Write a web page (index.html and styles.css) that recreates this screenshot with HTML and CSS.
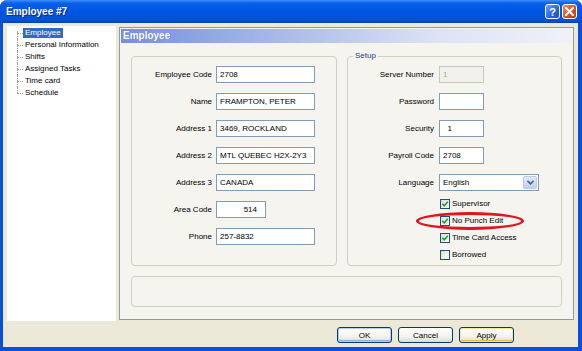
FILE: index.html
```html
<!doctype html>
<html lang="en">
<head>
	<meta charset="UTF-8">
	<title>Employee #7</title>
	<link rel="stylesheet" href="styles.css">
</head>
<body>

	<div class="window">

		<div class="titleBar">
			<span class="titleText">Employee #7</span>
			<span class="titleButtons">
				<span class="capBtn helpBtn">?</span>
				<span class="capBtn closeBtn">
					<svg width="9" height="9" viewBox="0 0 9 9"><path d="M1 1L8 8M8 1L1 8" stroke="#fff" stroke-width="2" stroke-linecap="square"/></svg>
				</span>
			</span>
		</div>

		<div class="frame">

			<div class="mainRow">

				<ul class="tree">
					<li><span class="selected">Employee</span></li>
					<li><span>Personal Information</span></li>
					<li><span>Shifts</span></li>
					<li><span>Assigned Tasks</span></li>
					<li><span>Time card</span></li>
					<li><span>Schedule</span></li>
				</ul>

				<div class="page">
					<div class="pageHeader">Employee</div>

					<div class="groups">

						<fieldset class="group personGroup">
							<div class="form personForm">
								<label>Employee Code</label><input class="field" type="text" value="2708">
								<label>Name</label><input class="field" type="text" value="FRAMPTON, PETER">
								<label>Address 1</label><input class="field" type="text" value="3469, ROCKLAND">
								<label>Address 2</label><input class="field" type="text" value="MTL QUEBEC H2X-2Y3">
								<label>Address 3</label><input class="field" type="text" value="CANADA">
								<label>Area Code</label><input class="field shortField" type="text" value="514">
								<label>Phone</label><input class="field" type="text" value="257-8832">
							</div>
						</fieldset>

						<fieldset class="group setupGroup">
							<legend>Setup</legend>
							<div class="form setupForm">
								<label>Server Number</label><input class="field smallField" type="text" value="1" disabled>
								<label>Password</label><input class="field smallField" type="password" value="">
								<label>Security</label><input class="field smallField" type="text" value="  1">
								<label>Payroll Code</label><input class="field smallField" type="text" value="2708">
								<label>Language</label>
								<div class="combo">
									<span class="comboText">English</span>
									<span class="comboBtn">
										<svg width="7" height="5" viewBox="0 0 7 5"><path d="M0.5 0.8L3.5 3.8L6.5 0.8" fill="none" stroke="#4d6185" stroke-width="1.6"/></svg>
									</span>
								</div>
							</div>

							<div class="checks">
								<div class="check"><span class="box on"><svg width="8" height="8" viewBox="0 0 8 8"><path d="M1.2 3.8L3.2 5.8L6.8 1.8" fill="none" stroke="#21a121" stroke-width="1.6"/></svg></span>Supervisor</div>
								<div class="check"><span class="box on"><svg width="8" height="8" viewBox="0 0 8 8"><path d="M1.2 3.8L3.2 5.8L6.8 1.8" fill="none" stroke="#21a121" stroke-width="1.6"/></svg></span>No Punch Edit<span class="ring"></span></div>
								<div class="check"><span class="box on"><svg width="8" height="8" viewBox="0 0 8 8"><path d="M1.2 3.8L3.2 5.8L6.8 1.8" fill="none" stroke="#21a121" stroke-width="1.6"/></svg></span>Time Card Access</div>
								<div class="check"><span class="box"></span>Borrowed</div>
							</div>
						</fieldset>

					</div>

					<div class="group notesGroup"></div>
				</div>

			</div>

			<div class="buttonRow">
				<button class="btn okBtn">OK</button>
				<button class="btn">Cancel</button>
				<button class="btn applyBtn">Apply</button>
			</div>

		</div>

	</div>

</body>
</html>
```

FILE: styles.css
```css
* {
	box-sizing: border-box;
}
html, body {
	margin: 0px;
	padding: 0px;
	background: #ffffff;
}
body {
	font-family: "Liberation Sans", Arial, sans-serif;
	font-size: 8px;
	color: #000000;
}

.window {
	width: 582px;
	height: 351px;
	display: flex;
	flex-direction: column;
	background: #0a4fd6;
	border-radius: 7px 7px 0 0;
}

/* title bar */
.titleBar {
	height: 23px;
	flex: none;
	display: flex;
	align-items: center;
	justify-content: space-between;
	padding: 0 5px 0 6px;
	border-radius: 7px 7px 0 0;
	background: linear-gradient(to bottom, #3d8ffa 0%, #0a5fe8 14%, #0055e3 50%, #0352d8 88%, #0341b4 100%);
}
.titleText {
	color: #ffffff;
	font-weight: bold;
	font-size: 10px;
	text-shadow: 1px 1px 0 #0b2a8a;
}
.titleButtons {
	display: flex;
	gap: 2px;
}
.capBtn {
	width: 15px;
	height: 15px;
	border: 1px solid #ffffff;
	border-radius: 3px;
	display: flex;
	align-items: center;
	justify-content: center;
}
.helpBtn {
	background: linear-gradient(135deg, #6fa1ff, #2363e0 60%, #1a52cc);
	color: #ffffff;
	font-weight: bold;
	font-size: 11px;
}
.closeBtn {
	background: linear-gradient(135deg, #f0906c, #d9502c 55%, #c03a1c);
}

/* dialog body */
.frame {
	flex: 1;
	margin: 0 4px 4px 3px;
	padding: 3px 4px 0 4px;
	background: #ece9d8;
	display: flex;
	flex-direction: column;
}
.mainRow {
	display: flex;
	gap: 3px;
	height: 295px;
}

/* tree */
.tree {
	width: 109px;
	margin: 0;
	padding: 1px 0 0 0;
	list-style: none;
	background: #ffffff;
}
.tree li {
	position: relative;
	height: 12px;
	display: flex;
	align-items: center;
	padding-left: 16px;
}
.tree li span {
	height: 10px;
	line-height: 10px;
	padding: 0 2px;
	white-space: nowrap;
}
.tree li span.selected {
	background: #316ac5;
	color: #ffffff;
}
.tree li::before {
	content: "";
	position: absolute;
	left: 10px;
	top: 6px;
	width: 6px;
	border-top: 1px dotted #9a9a9a;
}
.tree li::after {
	content: "";
	position: absolute;
	left: 10px;
	top: 0;
	bottom: 0;
	border-left: 1px dotted #9a9a9a;
}
.tree li:first-child::after {
	top: 4px;
}
.tree li:last-child::after {
	bottom: 6px;
}

/* page */
.page {
	flex: 1;
	margin: 1px 0;
	border: 1px solid #919b9c;
	background: #f5f4ef;
	display: flex;
	flex-direction: column;
}
.pageHeader {
	margin: 1px 2px 0 1px;
	height: 14px;
	line-height: 14px;
	padding-left: 2px;
	font-size: 10px;
	font-weight: bold;
	color: #ffffff;
	text-shadow: 1px 0 0 rgba(40, 60, 140, 0.3);
	background: linear-gradient(to right, #7590dc 0%, #a8b9ea 35%, #dde3f5 70%, #f0f1f8 100%);
}
.groups {
	display: flex;
	gap: 10px;
	margin: 13px 11px 0 11px;
	height: 210px;
}
.group {
	margin: 0;
	padding: 0;
	min-width: 0;
	border: 1px solid #d0d0bf;
	border-radius: 4px;
}
.personGroup {
	width: 206px;
	flex: none;
	padding-top: 9px;
}
.setupGroup {
	flex: 1;
	margin-top: -4px;
	padding-top: 6px;
}
.setupGroup legend {
	margin-left: 5px;
	padding: 0 2px;
	line-height: 8px;
	color: #1b3a8c;
}
.notesGroup {
	margin: 10px 11px 0 11px;
	height: 31px;
}

/* form rows */
.form {
	display: grid;
	row-gap: 10px;
	grid-auto-rows: 17px;
	align-items: center;
}
.personForm {
	grid-template-columns: 80px auto;
	column-gap: 4px;
}
.setupForm {
	grid-template-columns: 86px auto;
	column-gap: 5px;
}
.form label {
	text-align: right;
	line-height: 17px;
	white-space: nowrap;
}
.field {
	width: 99px;
	height: 17px;
	margin: 0;
	padding: 0 3px;
	border: 1px solid #7f9db9;
	background: #ffffff;
	font-family: inherit;
	font-size: 8px;
	color: #000000;
	outline: none;
}
.shortField {
	width: 50px;
	text-align: right;
	padding-right: 8px;
}
.smallField {
	width: 45px;
}
.field:disabled {
	background: #f1f0ea;
	border-color: #c9c7ba;
	color: #aca899;
}

.combo {
	width: 100px;
	height: 17px;
	border: 1px solid #7f9db9;
	background: #ffffff;
	display: flex;
	align-items: center;
	justify-content: space-between;
	padding: 1px 1px 1px 3px;
}
.comboBtn {
	width: 14px;
	height: 13px;
	border: 1px solid #b9c9ef;
	border-radius: 2px;
	background: linear-gradient(to bottom, #e0e9fd, #c0d1f7);
	display: flex;
	align-items: center;
	justify-content: center;
}

/* checkboxes */
.checks {
	margin: 7px 0 0 92px;
	display: flex;
	flex-direction: column;
	gap: 6px;
}
.check {
	position: relative;
	height: 11px;
	display: flex;
	align-items: center;
	gap: 2px;
	white-space: nowrap;
}
.box {
	width: 10px;
	height: 10px;
	flex: none;
	border: 1px solid #1c5180;
	background: linear-gradient(135deg, #dcdcd7, #ffffff);
	display: flex;
	align-items: center;
	justify-content: center;
}
.ring {
	position: absolute;
	left: -24px;
	top: -3px;
	width: 108px;
	height: 18px;
	border: 3px solid #e2151d;
	border-radius: 50%;
}

/* buttons */
.buttonRow {
	display: flex;
	justify-content: flex-end;
	gap: 6px;
	margin-top: 6px;
	padding-right: 60px;
}
.btn {
	width: 55px;
	height: 16px;
	padding: 0;
	border: 1px solid #003c74;
	border-radius: 3px;
	background: linear-gradient(to bottom, #ffffff 0%, #f4f3ee 60%, #dedbd0 100%);
	font-family: inherit;
	font-size: 8px;
	color: #000000;
}
.okBtn {
	box-shadow: inset 0 0 0 1px #b7cdf2, inset 0 -1px 0 1px #8fb0e8;
}
.applyBtn {
	box-shadow: inset 0 0 0 1px #fde3a0, inset 0 -1px 0 1px #f6b436;
}
```
